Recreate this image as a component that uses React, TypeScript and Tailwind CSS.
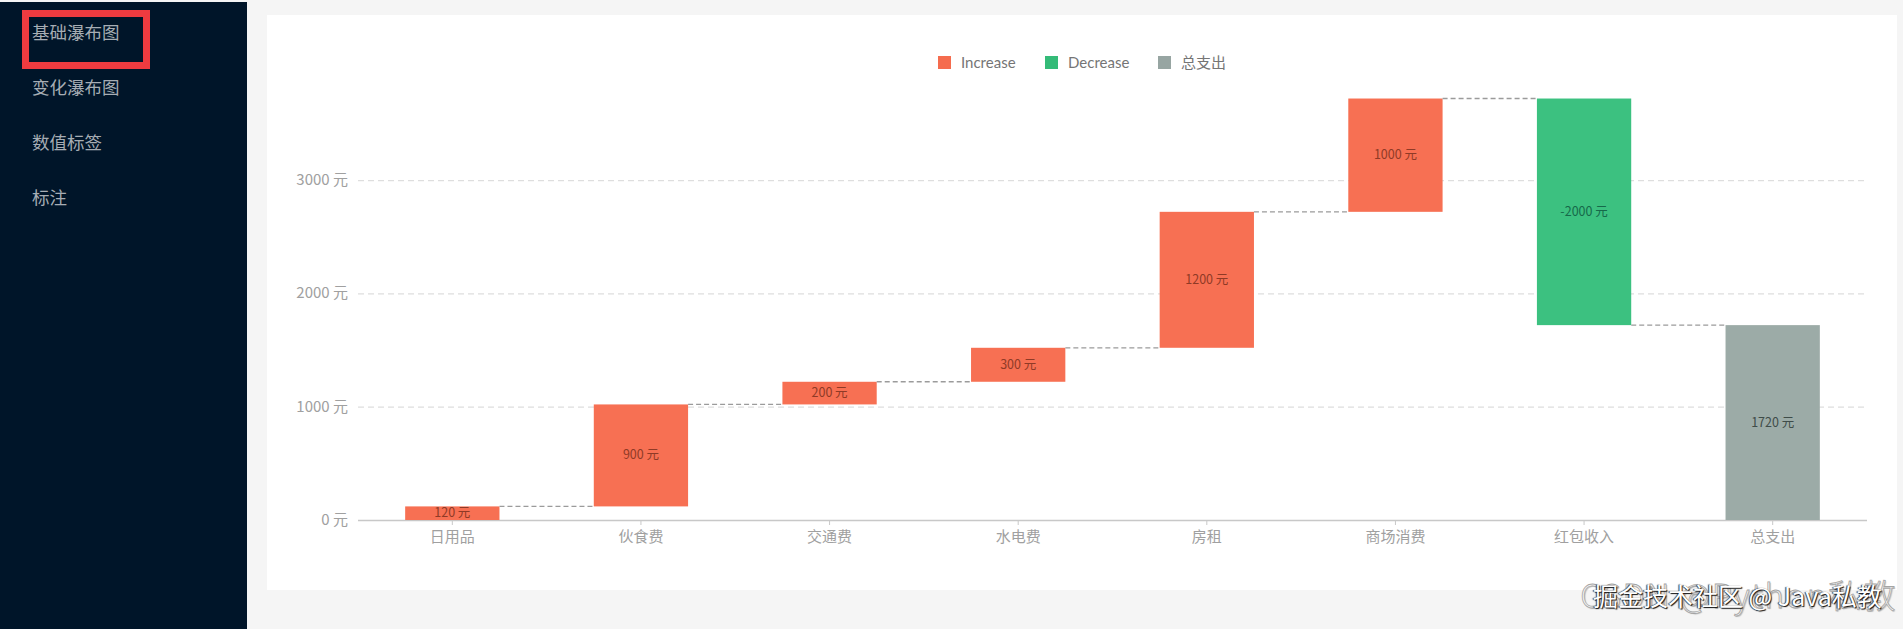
const menu = ["基础瀑布图", "变化瀑布图", "数值标签", "标注"];

const font = "'Noto Sans CJK SC', 'Noto Sans', sans-serif";
const legendFont = "Lato, 'Noto Sans CJK SC', sans-serif";

const BASE = 520;
const PER_UNIT = 0.1133;
const AXIS_LEFT = 358;
const AXIS_RIGHT = 1867;
const BAND = (AXIS_RIGHT - AXIS_LEFT) / 8;
const BAR_W = 94.3;

const y = (value: number) => BASE - value * PER_UNIT;

type Bar = { name: string; from: number; to: number; label: string; color: string; ink: string };

const bars: Bar[] = [
  { name: "日用品", from: 0, to: 120, label: "120 元", color: "#f77053", ink: "#8f3a26" },
  { name: "伙食费", from: 120, to: 1020, label: "900 元", color: "#f77053", ink: "#8f3a26" },
  { name: "交通费", from: 1020, to: 1220, label: "200 元", color: "#f77053", ink: "#8f3a26" },
  { name: "水电费", from: 1220, to: 1520, label: "300 元", color: "#f77053", ink: "#8f3a26" },
  { name: "房租", from: 1520, to: 2720, label: "1200 元", color: "#f77053", ink: "#8f3a26" },
  { name: "商场消费", from: 2720, to: 3720, label: "1000 元", color: "#f77053", ink: "#8f3a26" },
  { name: "红包收入", from: 3720, to: 1720, label: "-2000 元", color: "#3cc180", ink: "#16694a" },
  { name: "总支出", from: 1720, to: 0, label: "1720 元", color: "#9caba7", ink: "#3f4c49" },
];

const legend = [
  { x: 938, text: "Increase", color: "#f56c4e" },
  { x: 1045, text: "Decrease", color: "#34bb78" },
  { x: 1158, text: "总支出", color: "#97a5a2" },
];

const WaterfallChart = () => (
  <svg width="1630" height="575" viewBox="267 15 1630 575" style={{ fontFamily: font }} className="block">
    {legend.map((item) => (
      <g key={item.text}>
        <rect x={item.x} y={56} width={13} height={13} fill={item.color} />
        <text x={item.x + 23} y={68} fontSize={15} fill="#757575" style={{ fontFamily: legendFont }}>
          {item.text}
        </text>
      </g>
    ))}

    {[1000, 2000, 3000].map((value) => (
      <line
        key={value}
        x1={AXIS_LEFT}
        x2={AXIS_RIGHT}
        y1={y(value) + 0.5}
        y2={y(value) + 0.5}
        stroke="#dedede"
        strokeWidth={1.2}
        strokeDasharray="6 4"
      />
    ))}

    {[0, 1000, 2000, 3000].map((value) => (
      <text key={value} x={348} y={y(value) + 5} textAnchor="end" fontSize={15} fill="#a0a0a0">
        {value} 元
      </text>
    ))}

    <line x1={AXIS_LEFT} x2={AXIS_RIGHT} y1={BASE + 0.5} y2={BASE + 0.5} stroke="#c8c8c8" strokeWidth={1.5} />

    {bars.map((bar, index) => {
      const left = AXIS_LEFT + BAND * index + (BAND - BAR_W) / 2;
      const center = AXIS_LEFT + BAND * index + BAND / 2;
      const top = y(Math.max(bar.from, bar.to));
      const bottom = y(Math.min(bar.from, bar.to));
      return (
        <g key={bar.name}>
          <rect x={left} y={top} width={BAR_W} height={bottom - top} fill={bar.color} />
          {index < bars.length - 1 && (
            <line
              x1={left + BAR_W}
              x2={left + BAND}
              y1={y(bar.to)}
              y2={y(bar.to)}
              stroke="#9b9b9b"
              strokeWidth={1.3}
              strokeDasharray="5 3"
            />
          )}
          <text x={center} y={(top + bottom) / 2 + 4} textAnchor="middle" fontSize={12.5} fill={bar.ink}>
            {bar.label}
          </text>
          <line x1={center} x2={center} y1={BASE} y2={BASE + 5} stroke="#c8c8c8" />
          <text x={center} y={BASE + 22} textAnchor="middle" fontSize={15} fill="#a0a0a0">
            {bar.name}
          </text>
        </g>
      );
    })}
  </svg>
);

export default function App() {
  return (
    <div className="relative flex h-screen w-full overflow-hidden bg-[#f5f5f5] pt-[2px]" style={{ fontFamily: font }}>
      <aside className="w-[247px] shrink-0 bg-[#001529] pt-[3px]">
        <ul>
          {menu.map((item) => (
            <li key={item} className="flex h-[55px] items-center pl-[32px] text-[17.5px] text-[#a6adb4]">
              {item}
            </li>
          ))}
        </ul>
      </aside>

      <main className="flex-1 pl-[20px] pr-[6px] pt-[13px]">
        <div className="h-[575px] bg-white">
          <WaterfallChart />
        </div>
      </main>

      <div className="pointer-events-none absolute left-[22px] top-[10px] h-[59px] w-[128px] border-[7px] border-[#ee3b40]" />

      <span className="pointer-events-none absolute right-[6px] top-[572px] whitespace-nowrap text-[33px] font-light leading-[44px] tracking-[1.6px] text-[#f8f8f8] [-webkit-text-stroke:0.8px_#a4a4a4] [text-shadow:1px_1px_1px_#bdbdbd]">
        CSDN @Python私教
      </span>
      <span className="pointer-events-none absolute left-[1593px] top-[578px] whitespace-nowrap text-[25px] leading-[34px] text-white [text-shadow:1px_1px_1px_#111,-1px_0_1px_#333]">
        掘金技术社区 @ Java私教
      </span>
    </div>
  );
}
